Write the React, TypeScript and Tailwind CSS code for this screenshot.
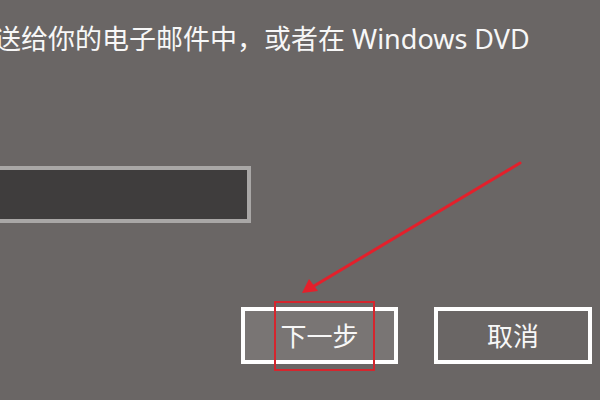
import React from "react";

export default function App() {
  return (
    <div
      className="relative w-[600px] h-[400px] overflow-hidden bg-[#6a6665] text-[#f7f7f7]"
      style={{ fontFamily: '"Noto Sans", "Noto Sans CJK SC", sans-serif' }}
    >
      <div className="flex flex-col">
        <div className="mt-[25px] -ml-[6px] whitespace-nowrap text-[27px] leading-[27px]">
          送给你的电子邮件中，或者在 Windows DVD
        </div>
        <div className="mt-[114px] -ml-[4px] w-[255px] h-[57px] border-4 border-[#a9a7a6] bg-[#3f3d3d]" />
        <div className="mt-[84px] flex justify-end gap-[36px] pr-[8px]">
          <button className="w-[157px] h-[57px] border-4 border-white bg-[#797574] text-[26px] leading-none flex items-center justify-center">
            下一步
          </button>
          <button className="w-[158px] h-[57px] border-4 border-white bg-[#6a6665] text-[26px] leading-none flex items-center justify-center">
            取消
          </button>
        </div>
      </div>

      {/* annotation overlay */}
      <div className="absolute left-[274px] top-[301px] w-[101px] h-[70px] border-2 border-[#d5262e]" />
      <svg className="absolute left-0 top-0" width="600" height="400" viewBox="0 0 600 400">
        <line x1="520" y1="163" x2="314" y2="286" stroke="#e3202b" strokeWidth="3" strokeLinecap="round" />
        <polygon points="302,293 309,279 318,291" fill="#e3202b" />
      </svg>
    </div>
  );
}
